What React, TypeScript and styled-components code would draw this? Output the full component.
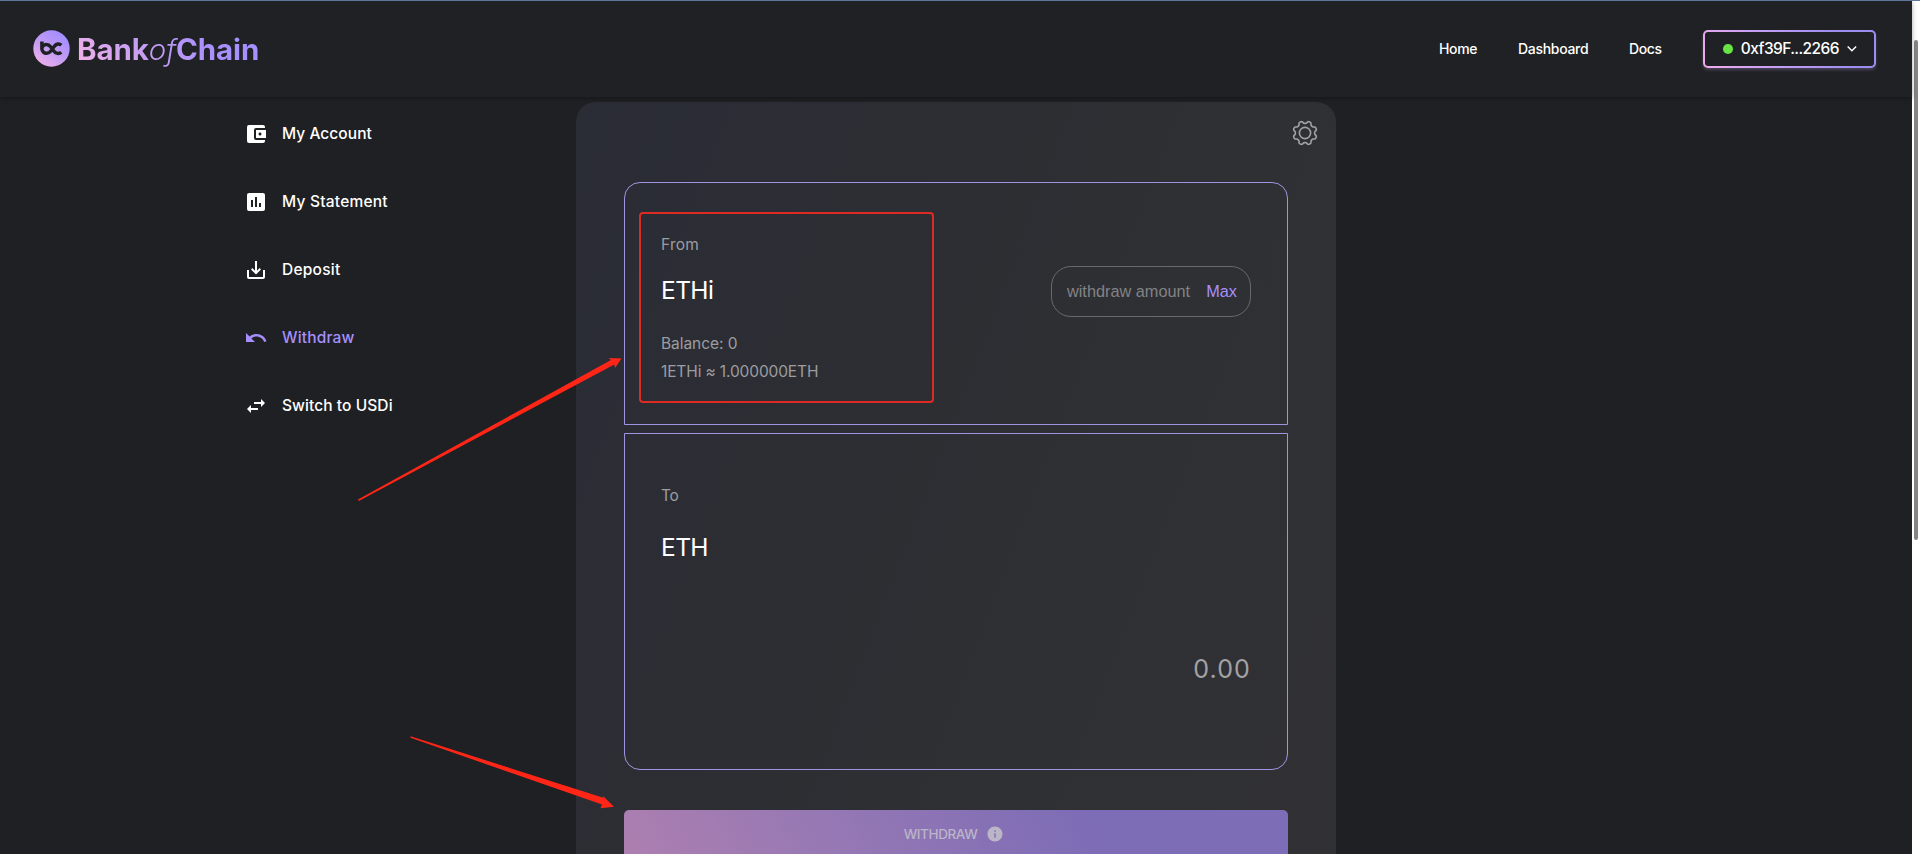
import React from "react";
import styled, { createGlobalStyle } from "styled-components";
import {
  MdAccountBalanceWallet,
  MdAssessment,
  MdInfo,
  MdSaveAlt,
  MdSwapHoriz,
  MdUndo,
} from "react-icons/md";

const GlobalStyle = createGlobalStyle`
  * { box-sizing: border-box; }
  html, body { margin: 0; background: #1f2023; }
  body { overflow: hidden; font-family: Inter, "Open Sans", sans-serif; color: #fff; }
`;

const Window = styled.div`
  position: relative;
  display: flex;
  height: 854px;
  overflow: hidden;
  border-top: 1px solid #5d7799;
`;

const Page = styled.div`
  display: flex;
  flex-direction: column;
  width: 1912px;
  background: #1f2023;
`;

const ScrollTrack = styled.div`
  width: 8px;
  padding: 39px 2px 0;
  background: #fff;
`;

const ScrollThumb = styled.div`
  height: 500px;
  border-radius: 2px;
  background: #858585;
`;

const Header = styled.header`
  z-index: 1;
  display: flex;
  flex: none;
  align-items: center;
  justify-content: space-between;
  height: 96px;
  padding: 0 36px 0 33px;
  background: #202124;
  box-shadow: 0 1px 5px rgba(0, 0, 0, 0.35);
`;

const Brand = styled.div`
  display: flex;
  align-items: center;
  gap: 7px;
  height: 37px;
  margin-bottom: 1px;
`;

const BrandName = styled.span`
  font-size: 29.5px;
  font-weight: 700;
  line-height: 36px;
  letter-spacing: -0.12px;
  color: transparent;
  background: linear-gradient(50deg, #eeb0ea 4%, #c59df2 38%, #a68fff 75%);
  background-clip: text;

  i { font-weight: 300; }
`;

const Nav = styled.nav`
  display: flex;
  align-items: center;
`;

const Text = styled.span<{ $size: number; $weight?: number; $line?: number; $track?: number; $color?: string }>`
  display: block;
  font-size: ${(p) => p.$size}px;
  font-weight: ${(p) => p.$weight ?? 400};
  line-height: ${(p) => p.$line ?? 24}px;
  letter-spacing: ${(p) => p.$track ?? 0}px;
  color: ${(p) => p.$color ?? "#fff"};
  white-space: nowrap;
`;

const NavLink = styled.a<{ $width: number }>`
  width: ${(p) => p.$width}px;
`;

const AccountButton = styled.button`
  display: flex;
  align-items: center;
  width: 173px;
  height: 38px;
  padding: 0 16px 0 18px;
  font-family: inherit;
  border: 2px solid transparent;
  border-radius: 5px;
  background:
    linear-gradient(#202124, #202124) padding-box,
    linear-gradient(60deg, #f0aaea 4%, #c8a0f5 35%, #9c8df0 80%) border-box;
  box-shadow: 0 2px 3px rgba(170, 150, 220, 0.3);
`;

const StatusDot = styled.span`
  width: 10px;
  height: 10px;
  margin-right: 8px;
  border-radius: 50%;
  background: #68e544;
`;

const AccountText = styled.span`
  width: 107px;
  text-align: left;
`;

const Body = styled.div`
  display: flex;
  flex: 1;
  align-items: flex-start;
  padding: 5px 0 0 244px;
`;

const Sidebar = styled.ul`
  display: flex;
  flex-direction: column;
  gap: 44px;
  width: 332px;
  margin: 0;
  padding: 20px 0 0;
  list-style: none;
`;

const MenuItem = styled.li<{ $active?: boolean }>`
  display: flex;
  align-items: center;
  gap: 14px;
  height: 24px;
  color: ${(p) => (p.$active ? "#a68ffc" : "#fff")};
`;

const Card = styled.section`
  width: 760px;
  height: 800px;
  padding: 18px 48px 0;
  border-radius: 20px;
  background: linear-gradient(111deg, #2a2c36 0%, #2d2e33 38%, #2f3034 65%, #313134 100%);
`;

const Tools = styled.div`
  display: flex;
  justify-content: flex-end;
  height: 62px;
  margin-right: -30px;
`;

const Panel = styled.div<{ $height: number; $position: "top" | "bottom" }>`
  display: flex;
  justify-content: space-between;
  height: ${(p) => p.$height}px;
  padding: 0 36px;
  border: 1px solid #a093e0;
  border-radius: ${(p) => (p.$position === "top" ? "16px 16px 0 0" : "0 0 16px 16px")};
`;

const PanelGap = styled.div`
  height: 8px;
`;

const FromDetails = styled.div`
  display: flex;
  flex-direction: column;
  padding-top: 50px;
`;

const FromToken = styled.div`
  padding: 17px 0 26px;
`;

const BalanceLines = styled.div`
  display: flex;
  flex-direction: column;
  gap: 4px;
`;

const AmountField = styled.div`
  display: flex;
  align-items: center;
  justify-content: space-between;
  width: 200px;
  height: 51px;
  margin-top: 83px;
  padding: 0 13px 2px 15px;
  border: 1px solid #68696d;
  border-radius: 20px;
  font-family: "Liberation Sans", Arial, sans-serif;
`;

const ToDetails = styled.div`
  display: flex;
  flex-direction: column;
  gap: 23px;
  padding-top: 50px;
`;

const Received = styled.div`
  padding-top: 219px;
`;

const SubmitButton = styled.button`
  display: flex;
  align-items: center;
  justify-content: center;
  gap: 9px;
  width: 100%;
  height: 48px;
  margin-top: 40px;
  padding: 0 4px 0 0;
  border: 0;
  border-radius: 5px;
  font-family: inherit;
  color: #bbb5c8;
  background: linear-gradient(60deg, #ad7fb0 0%, #9678b4 32%, #7e6db6 68%, #7c6db6 100%);
`;

const Highlight = styled.div`
  position: absolute;
  left: 638.5px;
  top: 211px;
  width: 295px;
  height: 191px;
  border: 2px solid #dd2b23;
  border-radius: 4px;
`;

const Arrows = styled.svg`
  position: absolute;
  left: 0;
  top: -1px;
  pointer-events: none;
`;

const gearOutline = Array.from({ length: 160 }, (_, i) => {
  const angle = (i / 160) * Math.PI * 2;
  const wave = Math.tanh(-2 * Math.cos(angle * 8)) / Math.tanh(2);
  const radius = 10.8 + 1.15 * wave;
  return `${(13 + radius * Math.cos(angle)).toFixed(2)},${(13 + radius * Math.sin(angle)).toFixed(2)}`;
}).join(" ");

const GearIcon = () => (
  <svg width="26" height="26" viewBox="0 0 26 26" fill="none" stroke="#a2a2a5" strokeWidth="1.6" strokeLinejoin="round">
    <polygon points={gearOutline} />
    <circle cx="13" cy="13" r="5.6" />
  </svg>
);

const LogoMark = () => (
  <svg width="37" height="37" viewBox="0 0 37 37" fill="none">
    <defs>
      <linearGradient id="mark" x1="6" y1="34" x2="27" y2="5" gradientUnits="userSpaceOnUse">
        <stop stopColor="#eeb0ea" />
        <stop offset="0.5" stopColor="#c39cf3" />
        <stop offset="1" stopColor="#a68fff" />
      </linearGradient>
    </defs>
    <circle cx="18.5" cy="18.5" r="18.2" fill="url(#mark)" />
    <path
      d="M8.9 11.6V19.3M28.3 15.2C26.2 13.2 23.4 13.9 21.6 16L17.6 21.2C16.6 22.5 15.4 23.2 13.7 23.2A4.4 4.4 0 0 1 8.9 19A4.4 4.4 0 0 1 13.5 14.6C15.4 14.6 16.6 15.5 17.6 16.8L21 21.2C23 23.7 26 24.2 28.3 22.2"
      stroke="#202124"
      strokeWidth="3.5"
    />
  </svg>
);

const ChevronIcon = () => (
  <svg width="12" height="8" viewBox="0 0 12 8" fill="none" stroke="#fff" strokeWidth="1.5">
    <path d="M1.7 1.5L6 5.8L10.3 1.5" />
  </svg>
);

const menu = [
  { label: "My Account", Icon: MdAccountBalanceWallet, track: 0.05 },
  { label: "My Statement", Icon: MdAssessment, track: 0.22 },
  { label: "Deposit", Icon: MdSaveAlt, track: 0.25 },
  { label: "Withdraw", Icon: MdUndo, track: 0.15, active: true },
  { label: "Switch to USDi", Icon: MdSwapHoriz, track: 0.08 },
];

export default function App() {
  return (
    <>
      <GlobalStyle />
      <Window>
        <Page>
          <Header>
            <Brand>
              <LogoMark />
              <BrandName>Bank<i>of</i>Chain</BrandName>
            </Brand>
            <Nav>
              <NavLink $width={79}><Text $size={14} $weight={500} $track={-0.35}>Home</Text></NavLink>
              <NavLink $width={111}><Text $size={14} $weight={500} $track={-0.3}>Dashboard</Text></NavLink>
              <NavLink $width={74}><Text $size={14} $weight={500} $track={-0.35}>Docs</Text></NavLink>
              <AccountButton>
                <StatusDot />
                <AccountText><Text $size={15.5} $weight={500} $track={-0.58}>0xf39F...2266</Text></AccountText>
                <ChevronIcon />
              </AccountButton>
            </Nav>
          </Header>
          <Body>
            <Sidebar>
              {menu.map(({ label, Icon, track, active }) => (
                <MenuItem key={label} $active={active}>
                  <Icon size={24} />
                  <Text $size={15.5} $weight={500} $track={track} $color="inherit">{label}</Text>
                </MenuItem>
              ))}
            </Sidebar>
            <Card>
              <Tools><GearIcon /></Tools>
              <Panel $height={243} $position="top">
                <FromDetails>
                  <Text $size={15.5} $track={0.2} $color="#9d9da0">From</Text>
                  <FromToken><Text $size={24.5} $line={32} $track={-0.6}>ETHi</Text></FromToken>
                  <BalanceLines>
                    <Text $size={15.5} $track={-0.05} $color="#9d9da0">Balance: 0</Text>
                    <Text $size={15.5} $track={-0.13} $color="#9d9da0">1ETHi ≈ 1.000000ETH</Text>
                  </BalanceLines>
                </FromDetails>
                <AmountField>
                  <Text $size={16.3} $color="#828386">withdraw amount</Text>
                  <Text $size={16.3} $color="#a68ffc">Max</Text>
                </AmountField>
              </Panel>
              <PanelGap />
              <Panel $height={337} $position="bottom">
                <ToDetails>
                  <Text $size={15.5} $track={-0.3} $color="#9d9da0">To</Text>
                  <Text $size={24.5} $line={32} $track={-0.6}>ETH</Text>
                </ToDetails>
                <Received>
                  <Text $size={25} $line={32} $track={1.1} $color="#a2a2a5">0.00</Text>
                </Received>
              </Panel>
              <SubmitButton>
                <Text $size={13.5} $color="inherit" $weight={500} $track={-0.4}>WITHDRAW</Text>
                <MdInfo size={18} />
              </SubmitButton>
            </Card>
          </Body>
        </Page>
        <ScrollTrack><ScrollThumb /></ScrollTrack>
        <Highlight />
        <Arrows width="1912" height="854" viewBox="0 0 1912 854" fill="#ff2618">
          <path d="M358 499.5L611 360L608.5 358L621.5 358.5L615 368L614.3 364.5L358.8 501Z" />
          <path d="M410.5 736.3L602.5 797.5L603.5 796.5L614 806.8L600.5 808.3L602 804.5L410.5 737.8Z" />
        </Arrows>
      </Window>
    </>
  );
}
